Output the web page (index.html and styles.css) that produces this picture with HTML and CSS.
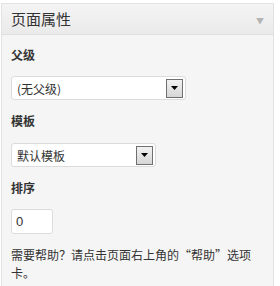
FILE: index.html
```html
<!DOCTYPE html>
<html lang="zh">
<head>
<meta charset="utf-8">
<link rel="stylesheet" href="styles.css">
</head>
<body>
<div class="panel">
  <div class="header">
    <h3 class="title">页面属性</h3>
    <span class="toggle">▼</span>
  </div>
  <div class="inside">
    <p class="label label-first">父级</p>
    <div class="select select-parent">
      <span class="value">(无父级)</span>
      <span class="btn"><svg width="7" height="4" viewBox="0 0 7 4"><path d="M0 0h7L3.5 4z" fill="#000"/></svg></span>
    </div>
    <p class="label">模板</p>
    <div class="select select-template">
      <span class="value">默认模板</span>
      <span class="btn"><svg width="7" height="4" viewBox="0 0 7 4"><path d="M0 0h7L3.5 4z" fill="#000"/></svg></span>
    </div>
    <p class="label">排序</p>
    <div class="input">0</div>
    <p class="help">需要帮助？请点击页面右上角的“帮助”选项卡。</p>
  </div>
</div>
</body>
</html>
```
FILE: styles.css
```css
html, body {
  margin: 0;
  padding: 0;
  background: #ffffff;
}
body {
  font-family: "Noto Sans CJK SC", "Noto Sans", sans-serif;
  color: #333333;
}
.panel {
  margin: 3px 0 0 1px;
  width: 271px;
  height: 290px;
  border: 1px solid #e2e2e2;
  border-bottom: none;
  background: #f5f5f5;
}
.header {
  height: 30px;
  display: flex;
  align-items: center;
  justify-content: space-between;
  padding: 0 9px 0 9px;
  background: linear-gradient(#f4f4f4, #eaeaea);
  border-bottom: 1px solid #dfdfdf;
}
.title {
  margin: 0;
  font-size: 15px;
  font-weight: normal;
  line-height: 20px;
  color: #333;
}
.toggle {
  font-size: 8px;
  color: #b4b4b4;
  margin-top: 2px;
}
.inside {
  padding: 0 0 0 9px;
}
.label {
  margin: 12px 0 0;
  font-size: 12px;
  line-height: 18px;
  font-weight: bold;
  color: #333;
}
.label-first {
  margin-top: 11px;
}
.select {
  margin-top: 12px;
  height: 22px;
  border: 1px solid #dcdcdc;
  border-radius: 3px;
  background: #fff;
  display: flex;
  align-items: center;
  justify-content: space-between;
  padding: 0 2px 0 5px;
  font-size: 12px;
  color: #333;
}
.select-parent { width: 166px; }
.select-template { width: 136px; margin-top: 13px; }
.btn {
  width: 15px;
  height: 17px;
  border: 1px solid #707070;
  background: linear-gradient(#f2f2f2, #d6d6d6);
  display: flex;
  align-items: center;
  justify-content: center;
}
.input {
  margin-top: 12px;
  width: 36px;
  height: 23px;
  border: 1px solid #dcdcdc;
  border-radius: 3px;
  background: #fff;
  font-family: "Liberation Sans", sans-serif;
  font-size: 13px;
  line-height: 23px;
  padding-left: 4px;
  color: #333;
}
.help {
  margin: 12px 0 0;
  width: 250px;
  font-size: 12px;
  line-height: 18px;
  color: #333;
}
```
